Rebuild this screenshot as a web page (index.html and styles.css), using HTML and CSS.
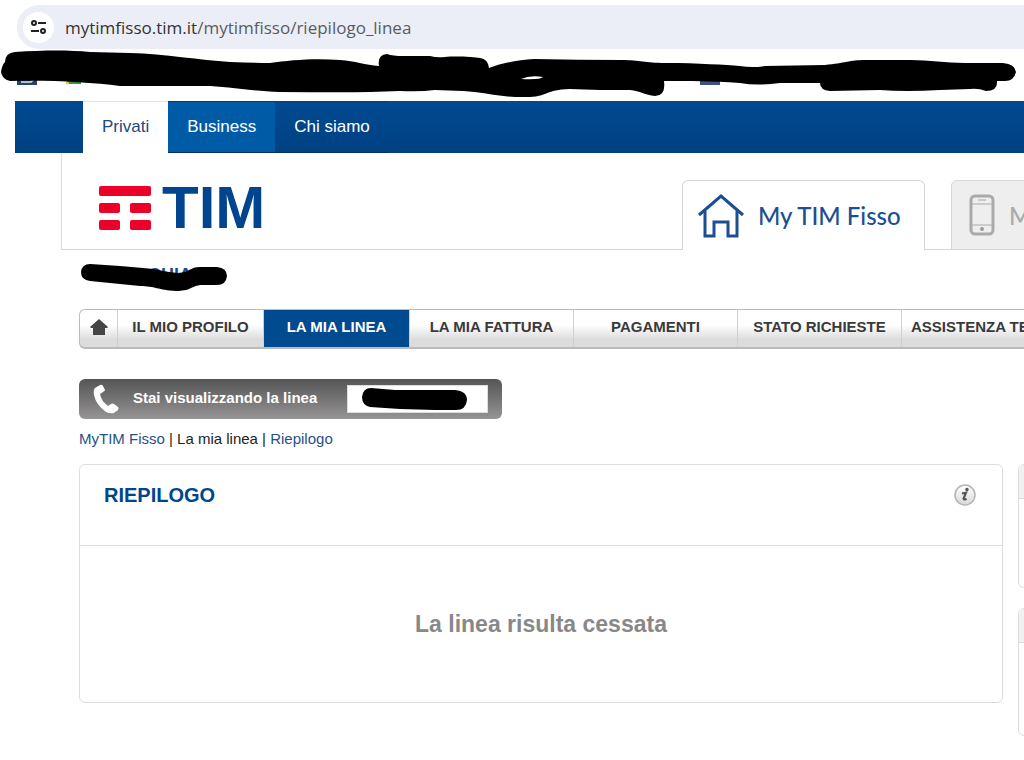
FILE: index.html
```html
<!DOCTYPE html>
<html lang="it">
<head>
    <meta charset="UTF-8">
    <meta name="viewport" content="width=device-width, initial-scale=1.0">
    <title>MyTIM Fisso - Riepilogo</title>
    <link rel="stylesheet" href="styles.css">
</head>
<body>
    <!-- Address bar -->
    <div class="address-bar">
        <button class="site-info" aria-label="Informazioni sul sito">
            <svg width="18" height="18" viewBox="0 0 18 18" fill="none" stroke="#222" stroke-width="2">
                <circle cx="4" cy="5" r="2"/>
                <path d="M8 5h8M1 13h8"/>
                <circle cx="13" cy="13" r="2"/>
            </svg>
        </button>
        <span class="url">mytimfisso.tim.it<span class="url-path">/mytimfisso/riepilogo_linea</span></span>
    </div>

    <!-- Bookmarks, crossed out -->
    <div class="bookmarks">
        <svg width="1024" height="52" viewBox="0 49 1024 52">
            <path fill="#24446f" d="M17 76h20v9H17z"/>
            <path stroke="#dfe8f2" stroke-width="1.5" fill="none" d="M21 82h10l3-3"/>
            <path fill="#2f9a4c" d="M67 78h14v6H67z"/>
            <path fill="#e8c33a" d="M66 82h3v2h-3z"/>
            <path fill="#3d5184" d="M700 78h20v7h-20z"/>
            <path fill="#000" d="M5 62Q5 53 15 52C45 50 70 50 90 52L130 53C165 54 200 60 230 62Q255 63 270 63C290 60 315 58 340 60C355 61 365 65 379 66Q377 55 387 54Q393 56 403 56H430Q437 58 445 57C455 56 475 57 480 58Q488 59 489 68C502 63 518 60 534 59Q578 60 622 60C640 60 645 63 665 63C700 63 725 65 740 66Q752 68 765 66L825 65C845 63 850 60 865 60H910C930 60 945 63 965 63H1003Q1015 64 1016 72Q1014 81 1005 81H997Q998 91 986 91Q978 88 970 89L940 90Q905 92 880 90L830 91Q820 90 820 83H780Q757 86 740 83C710 81 690 81 664 81Q666 96 655 96C645 95 640 91 630 90L600 90L570 89C545 90 548 96 530 97C500 98 485 92 463 91L435 90Q420 92 400 91C360 93 320 92 280 92C250 91 225 86 205 86H120C90 82 50 80 10 81Q2 79 1 72Q2 65 5 62Z"/>
            <path fill="#fff" d="M521 79Q530 75 543 77Q540 80 521 79Z"/>
        </svg>
    </div>

    <nav class="top-nav">
        <a href="#" class="top-link active">Privati</a>
        <a href="#" class="top-link business">Business</a>
        <a href="#" class="top-link">Chi siamo</a>
    </nav>

    <!-- Logo and site tabs -->
    <header class="site-header">
        <a href="#" class="logo">
            <svg width="54" height="46" viewBox="0 0 54 46" fill="#eb0028">
                <rect x="1" y="1" width="52" height="10" rx="2"/>
                <rect x="1" y="18" width="21" height="10" rx="2"/>
                <rect x="32" y="18" width="21" height="10" rx="2"/>
                <rect x="1" y="35" width="21" height="10" rx="2"/>
                <rect x="32" y="35" width="21" height="10" rx="2"/>
            </svg>
            <span class="logo-text">TIM</span>
        </a>
        <a href="#" class="site-tab current">
            <svg width="46" height="44" viewBox="0 0 46 44" fill="none" stroke="#1c4f91" stroke-width="3">
                <path d="M1 21L23 2l22 19"/>
                <path d="M7 17v25h9V28h14v14h9V17"/>
            </svg>
            <span>My TIM Fisso</span>
        </a>
        <a href="#" class="site-tab mobile">
            <svg width="26" height="42" viewBox="0 0 26 42" fill="none" stroke="#aaa">
                <rect x="2" y="2" width="22" height="38" rx="4" stroke-width="3"/>
                <path d="M3 10h20M3 31h20" stroke-width="1"/>
                <path d="M9 6h8" stroke-width="1"/>
                <circle cx="13" cy="35" r="2" fill="#999" stroke="none"/>
            </svg>
            <span>My TIM Mobile</span>
        </a>
    </header>

    <main class="content">
        <div class="customer">
            <span class="customer-name">CHIA</span>
            <svg class="customer-mark" width="148" height="30" viewBox="80 262 148 30">
                <path fill="#000" d="M90 264L120 266L143 268C158 269 165 272 178 273C190 272 190 267 200 267H217Q227 268 227 276Q226 285 217 285H200C190 287 190 291 176 291C158 290 155 286 140 286L120 284L90 281Q81 280 81 272Q82 264 90 264Z"/>
            </svg>
        </div>

        <nav class="main-nav">
            <a href="#" class="nav-item home" aria-label="Home">
                <svg width="18" height="16" viewBox="0 0 18 16" fill="#444">
                    <path d="M9 0l9 8-1 1h-2v7H3V9H1L0 8z"/>
                </svg>
            </a>
            <a href="#" class="nav-item narrow">IL MIO PROFILO</a>
            <a href="#" class="nav-item narrow selected">LA MIA LINEA</a>
            <a href="#" class="nav-item">LA MIA FATTURA</a>
            <a href="#" class="nav-item">PAGAMENTI</a>
            <a href="#" class="nav-item">STATO RICHIESTE</a>
            <a href="#" class="nav-item last">ASSISTENZA TECNICA</a>
        </nav>

        <div class="line-bar">
            <svg width="26" height="30" viewBox="0 0 26 30" fill="#fff">
                <path d="M2 4L7 1Q9 0 10 2l2 4q0 1-2 2L7 10q1 7 8 12l3-2q1-1 3 0l4 3q1 1 0 3l-4 3q-4 1-8-1Q3 21 1 11Q0 6 2 4z"/>
            </svg>
            <label for="line">Stai visualizzando la linea</label>
            <div class="line-field">
                <input type="text" id="line" readonly>
                <svg class="line-mark" width="108" height="24" viewBox="361 388 108 24">
                    <path fill="#000" d="M371 389L395 391H455Q467 392 467 401Q466 411 456 411H435L400 410L370 408Q362 406 362 398Q363 389 371 389Z"/>
                </svg>
            </div>
        </div>

        <div class="breadcrumb">
            <a href="#">MyTIM Fisso</a> | La mia linea | <a href="#">Riepilogo</a>
        </div>

        <div class="columns">
            <section class="panel">
                <div class="panel-head">
                    <h1>RIEPILOGO</h1>
                    <button class="info" aria-label="Informazioni">
                        <svg width="24" height="24" viewBox="0 0 24 24">
                            <defs>
                                <linearGradient id="shine" x1="0" y1="0" x2="0" y2="1">
                                    <stop offset="0" stop-color="#fff"/>
                                    <stop offset="1" stop-color="#d8d8d8"/>
                                </linearGradient>
                            </defs>
                            <circle cx="12" cy="12" r="10" fill="url(#shine)" stroke="#b4b4b4" stroke-width="1.5"/>
                            <circle cx="14" cy="6.5" r="1.7" fill="#555"/>
                            <path d="M9 10.5l4-.8-2.5 6q.5 1.500 3 0" fill="none" stroke="#555" stroke-width="2.2"/>
                        </svg>
                    </button>
                </div>
                <p class="message">La linea risulta cessata</p>
            </section>
            <aside class="sidebar">
                <div class="side-box first"><div class="side-head"></div></div>
                <div class="side-box"><div class="side-head"></div></div>
            </aside>
        </div>
    </main>
</body>
</html>
```
FILE: styles.css
```css
* {
    box-sizing: border-box;
}
body {
    margin: 0;
    padding-top: 5px;
    background: #fff;
    color: #222;
    font-family: "Liberation Sans", Arial, sans-serif;
    font-size: 15px;
    overflow: hidden;
}
a {
    color: #1f5288;
    text-decoration: none;
}
svg {
    display: block;
    flex-shrink: 0;
}
button {
    padding: 0;
    border: none;
    background: none;
    cursor: pointer;
}

/* Browser address bar */
.address-bar {
    display: flex;
    align-items: center;
    gap: 11px;
    height: 44px;
    margin-left: 17px;
    padding-left: 6px;
    border-radius: 22px 0 0 22px;
    background: #ebeef7;
}
.site-info {
    display: flex;
    align-items: center;
    justify-content: center;
    width: 31px;
    height: 31px;
    border-radius: 50%;
    background: #fff;
}
.url {
    font-family: "Open Sans", "Noto Sans", sans-serif;
    font-size: 17px;
    color: #333;
}
.url-path {
    color: #5a5c60;
}
.bookmarks {
    height: 52px;
}

/* Blue bar */
.top-nav {
    display: flex;
    height: 52px;
    margin-left: 15px;
    padding-left: 68px;
    background: linear-gradient(#004a91, #004182);
}
.top-link {
    display: flex;
    align-items: center;
    padding: 0 19px;
    border-top: 1px solid #003f7d;
    border-bottom: 1px solid #003068;
    font-size: 17px;
    color: #fff;
}
.top-link.active {
    background: #fff;
    border-color: #e4e4e4 #fff #fff;
    color: #1f4680;
}
.top-link.business {
    background: #005ba6;
}

/* Logo and tabs */
.site-header {
    display: flex;
    align-items: flex-end;
    height: 97px;
    margin-left: 61px;
    border-left: 1px solid #ddd;
    /* the line under the header, left open below the current tab */
    background: linear-gradient(#d6d6d6, #d6d6d6) bottom / 100% 1px no-repeat;
}
.logo {
    display: flex;
    align-items: center;
    gap: 10px;
    width: 620px;
    height: 84px;
    padding-left: 36px;
    flex-shrink: 0;
}
.logo-text {
    font-size: 60px;
    font-weight: bold;
    line-height: 60px;
    color: #00458e;
}
.site-tab {
    display: flex;
    align-items: center;
    gap: 14px;
    height: 70px;
    padding-left: 15px;
    border: 1px solid #d6d6d6;
    border-radius: 6px 6px 0 0;
    font-family: Lato, sans-serif;
    font-size: 24px;
    font-weight: 500;
    color: #1c4f91;
    white-space: nowrap;
    flex-shrink: 0;
}
.site-tab.current {
    width: 243px;
    margin-right: 26px;
    border-bottom: none;
    background: #fff;
}
.site-tab.mobile {
    width: 243px;
    padding-left: 17px;
    background: #eee;
    color: #aaa;
}

.content {
    padding-left: 79px;
}
.customer {
    position: relative;
    height: 59px;
    padding: 15px 0 0 69px;
}
.customer-name {
    font-size: 18px;
    line-height: 20px;
    font-weight: bold;
    color: #1c4f91;
}
.customer-mark {
    position: absolute;
    left: 1px;
    top: 12px;
}

/* Grey menu */
.main-nav {
    display: flex;
    height: 40px;
    border: solid #bbb;
    border-width: 1px 0 2px 1px;
    border-radius: 6px 0 0 6px;
    background: linear-gradient(#fff 40%, #dcdcdc 80%, #dcdcdc);
}
.nav-item {
    display: flex;
    align-items: center;
    justify-content: center;
    width: 164px;
    padding-bottom: 4px;
    border-right: 1px solid #d0d0d0;
    font-weight: bold;
    color: #3a3a3a;
    white-space: nowrap;
    flex-shrink: 0;
}
.nav-item.home {
    width: 38px;
}
.nav-item.narrow {
    width: 146px;
}
.nav-item.selected {
    background: #004a90;
    color: #fff;
}
.nav-item.last {
    justify-content: flex-start;
    padding-left: 9px;
}

/* Line being shown */
.line-bar {
    display: flex;
    align-items: center;
    width: 423px;
    height: 40px;
    margin-top: 30px;
    padding: 0 14px;
    border-radius: 6px;
    background: linear-gradient(#555, #969494);
    color: #fff;
    font-weight: bold;
}
.line-bar label {
    margin-left: 14px;
    padding-bottom: 3px;
}
.line-field {
    position: relative;
    margin-left: auto;
}
.line-field input {
    display: block;
    width: 141px;
    height: 28px;
    border: 1px solid #ddd;
    background: #fff;
}
.line-mark {
    position: absolute;
    left: 14px;
    top: 2px;
}

.breadcrumb {
    padding: 10px 0 15px;
    line-height: 20px;
}

/* Main panel and side boxes */
.columns {
    display: flex;
    align-items: flex-start;
    gap: 15px;
}
.panel {
    flex: 1;
    border: 1px solid #ddd;
    border-radius: 6px;
}
.panel-head {
    display: flex;
    justify-content: space-between;
    align-items: flex-start;
    height: 81px;
    padding: 18px 25px 0 24px;
    border-bottom: 1px solid #ddd;
}
.panel-head h1 {
    margin: 0;
    font-size: 20px;
    line-height: 24px;
    color: #00458e;
}
.message {
    margin: 0;
    padding: 64px 0;
    font-size: 23px;
    line-height: 28px;
    font-weight: bold;
    text-align: center;
    color: #888;
}
.sidebar {
    width: 6px;
}
.side-box {
    width: 240px;
    height: 128px;
    border: 1px solid #ddd;
    border-radius: 6px;
    overflow: hidden;
}
.side-box.first {
    height: 124px;
    margin-bottom: 20px;
}
.side-head {
    height: 34px;
    border-bottom: 1px solid #ddd;
    background: #f1f1f1;
}
```
